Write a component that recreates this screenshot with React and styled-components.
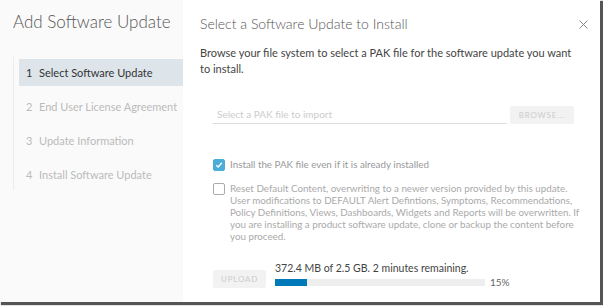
import styled, { createGlobalStyle } from "styled-components";

const Global = createGlobalStyle`
  body {
    margin: 0;
    background: #fff;
    font-family: Lato, "Open Sans", sans-serif;
  }
`;

const Page = styled.div`
  width: 603px;
  height: 306px;
  overflow: hidden;
`;

const Dialog = styled.div`
  width: 600px;
  height: 302px;
  display: flex;
  background: #fff;
  box-shadow: 2px 2px 1px 1px #555;
`;

const Sidebar = styled.div`
  width: 183px;
  background: #fafafa;
  padding-top: 9px;
`;

const SideTitle = styled.h1`
  margin: 0 0 0 13px;
  font-size: 17px;
  font-weight: 300;
  color: #565656;
  line-height: 26px;
  white-space: nowrap;
`;

const Steps = styled.ol`
  list-style: none;
  margin: 22px 0 0 13px;
  padding: 2px 0 2px 5px;
  border-left: 1px solid #ececec;
  display: flex;
  flex-direction: column;
  gap: 7px;
`;

const Step = styled.li`
  height: 27px;
  display: flex;
  align-items: center;
  padding-left: 7px;
  font-size: 11px;
  color: ${(p) => (p.active ? "#333" : "#bbb")};
  background: ${(p) => (p.active ? "#dde5eb" : "transparent")};
  span {
    width: 13px;
  }
`;

const Main = styled.div`
  flex: 1;
  padding: 12px 16px 0 17px;
  display: flex;
  flex-direction: column;
`;

const Header = styled.div`
  display: flex;
  justify-content: space-between;
  align-items: center;
  height: 22px;
`;

const Title = styled.h2`
  margin: 0;
  font-size: 14px;
  font-weight: 300;
  color: #555;
`;

const Close = styled.svg`
  margin-top: 2px;
  margin-right: -4px;
`;

const Intro = styled.p`
  margin: 11px 0 0;
  font-size: 11px;
  line-height: 16px;
  color: #444;
`;

const Form = styled.div`
  padding-left: 13px;
`;

const FileRow = styled.div`
  display: flex;
  align-items: center;
  margin: 29px 10px 0 0;
  gap: 3px;
`;

const FileInput = styled.div`
  flex: 1;
  height: 16px;
  border-bottom: 1px solid #ddd;
  padding-left: 4px;
  font-size: 10px;
  color: #ccc;
  line-height: 14px;
`;

const Button = styled.div`
  width: ${(p) => p.w}px;
  height: 18px;
  background: #f2f2f2;
  border-radius: 2px;
  display: flex;
  align-items: center;
  justify-content: center;
  font-size: 8px;
  letter-spacing: 0.8px;
  color: #ccc;
`;

const Check = styled.div`
  display: flex;
  gap: 5px;
  margin-top: ${(p) => p.mt}px;
  font-size: 9.8px;
  line-height: 12px;
  color: ${(p) => p.color};
`;

const Box = styled.div`
  flex: none;
  width: 10px;
  height: 10px;
  border-radius: 2px;
  margin-top: 1px;
  background: ${(p) => (p.on ? "#4aaed9" : "#fff")};
  border: 1px solid ${(p) => (p.on ? "#4aaed9" : "#aaa")};
  display: flex;
  align-items: center;
  justify-content: center;
`;

const UploadRow = styled.div`
  display: flex;
  align-items: flex-end;
  gap: 9px;
  margin-top: 20px;
`;

const Progress = styled.div`
  display: flex;
  flex-direction: column;
  gap: 2px;
  font-size: 10.5px;
  color: #444;
`;

const BarRow = styled.div`
  display: flex;
  align-items: center;
  gap: 5px;
  font-size: 10px;
  color: #666;
`;

const Track = styled.div`
  width: 210px;
  height: 7px;
  background: #eee;
`;

const Fill = styled.div`
  height: 100%;
  background: #0079b8;
`;

const steps = [
  "Select Software Update",
  "End User License Agreement",
  "Update Information",
  "Install Software Update",
];

export default function App() {
  const pct = 15;
  return (
    <Page>
      <Global />
      <Dialog>
        <Sidebar>
          <SideTitle>Add Software Update</SideTitle>
          <Steps>
            {steps.map((s, i) => (
              <Step key={s} active={i === 0}>
                <span>{i + 1}</span>
                {s}
              </Step>
            ))}
          </Steps>
        </Sidebar>
        <Main>
          <Header>
            <Title>Select a Software Update to Install</Title>
            <Close width="9" height="9" viewBox="0 0 9 9">
              <path d="M0.5 0.5 L8.5 8.5 M8.5 0.5 L0.5 8.5" stroke="#888" strokeWidth="1" />
            </Close>
          </Header>
          <Intro>
            Browse your file system to select a PAK file for the software update you want to
            install.
          </Intro>
          <Form>
            <FileRow>
              <FileInput>Select a PAK file to import</FileInput>
              <Button w={64}>BROWSE...</Button>
            </FileRow>
            <Check mt={34} color="#999">
              <Box on>
                <svg width="8" height="8" viewBox="0 0 8 8">
                  <path d="M1.2 4.2 L3.2 6 L6.8 1.8" fill="none" stroke="#fff" strokeWidth="1.4" />
                </svg>
              </Box>
              <span>Install the PAK file even if it is already installed</span>
            </Check>
            <Check mt={11} color="#aaa">
              <Box />
              <span>
                Reset Default Content, overwriting to a newer version provided by this update.
                User modifications to DEFAULT Alert Defintions, Symptoms, Recommendations,
                Policy Definitions, Views, Dashboards, Widgets and Reports will be overwritten. If
                you are installing a product software update, clone or backup the content before
                you proceed.
              </span>
            </Check>
            <UploadRow>
              <Button w={53}>UPLOAD</Button>
              <Progress>
                <span>372.4 MB of 2.5 GB. 2 minutes remaining.</span>
                <BarRow>
                  <Track>
                    <Fill style={{ width: `${pct}%` }} />
                  </Track>
                  {pct}%
                </BarRow>
              </Progress>
            </UploadRow>
          </Form>
        </Main>
      </Dialog>
    </Page>
  );
}
